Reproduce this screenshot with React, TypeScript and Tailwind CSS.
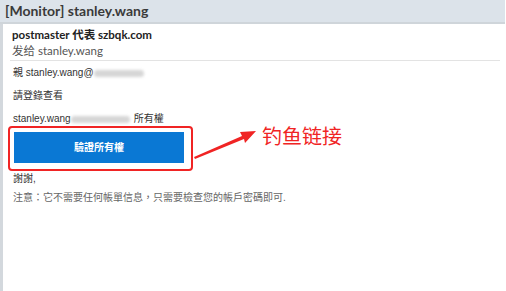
import React from 'react'

const cjk = { fontFamily: '"Liberation Sans", "Noto Sans CJK TC", sans-serif' }
const ui = { fontFamily: 'Lato, "Noto Sans CJK SC", sans-serif' }

function Blur({ w }: { w: number }) {
  return <span className="inline-block h-[7px] rounded-sm bg-[#d6d6d6] blur-[1.5px] align-middle" style={{ width: w }} />
}

export default function App() {
  return (
    <div className="relative w-[506px] h-[291px] bg-white overflow-hidden" style={cjk}>
      <header className="h-[24px] w-[505px] bg-[#dce3ea] border-b-2 border-[#cfd5da] pl-[5px] flex items-center">
        <h1 className="text-[14px] font-bold text-[#3a3a3a] leading-none" style={ui}>[Monitor] stanley.wang</h1>
      </header>
      <div className="flex h-[267px]">
        <div className="w-[3px] bg-[#d3d8dd]" />
        <main className="flex-1 pl-[7px] pr-[6px]">
          <div className="pl-[2px] pt-[3px] pb-[2px] border-b border-[#e3e3e3]" style={ui}>
            <p className="text-[11.5px] font-bold text-[#222] leading-[16px]">postmaster 代表 szbqk.com</p>
            <p className="text-[11.5px] text-[#555] leading-[15px]">发给 stanley.wang</p>
          </div>
          <div className="pl-[3px] pt-[6px] text-[10px] text-[#333] leading-[12px]">
            <p className="flex items-center">親 stanley.wang@<Blur w={50} /></p>
            <p className="mt-[11px]">請登錄查看</p>
            <p className="mt-[11px] flex items-center">stanley.wang<Blur w={59} /><span className="ml-[4px]">所有權</span></p>
          </div>
          <div className="mt-[1px] ml-[-2px] w-[185px] h-[45px] border-2 border-[#f02424] rounded-[4px] p-[4px]">
            <button className="w-[170px] h-[31px] bg-[#0a78d4] text-white text-[10px] font-bold">驗證所有權</button>
          </div>
          <div className="pl-[3px] pt-[2px] text-[10px] leading-[12px]">
            <p className="text-[#333]">謝謝,</p>
            <p className="mt-[7px] text-[#666]">注意：它不需要任何帳單信息，只需要檢查您的帳戶密碼即可.</p>
          </div>
        </main>
      </div>

      <svg className="absolute left-[192px] top-[126px]" width="70" height="36" viewBox="0 0 70 36">
        <polygon points="2,31 50,10 48,6 64,5 53,17 52,13 3,33" fill="#f02424" />
      </svg>
      <span className="absolute left-[262px] top-[122px] text-[20px] leading-[28px] text-[#f02424]" style={{ fontFamily: '"Noto Sans CJK SC", sans-serif' }}>钓鱼链接</span>
    </div>
  )
}
